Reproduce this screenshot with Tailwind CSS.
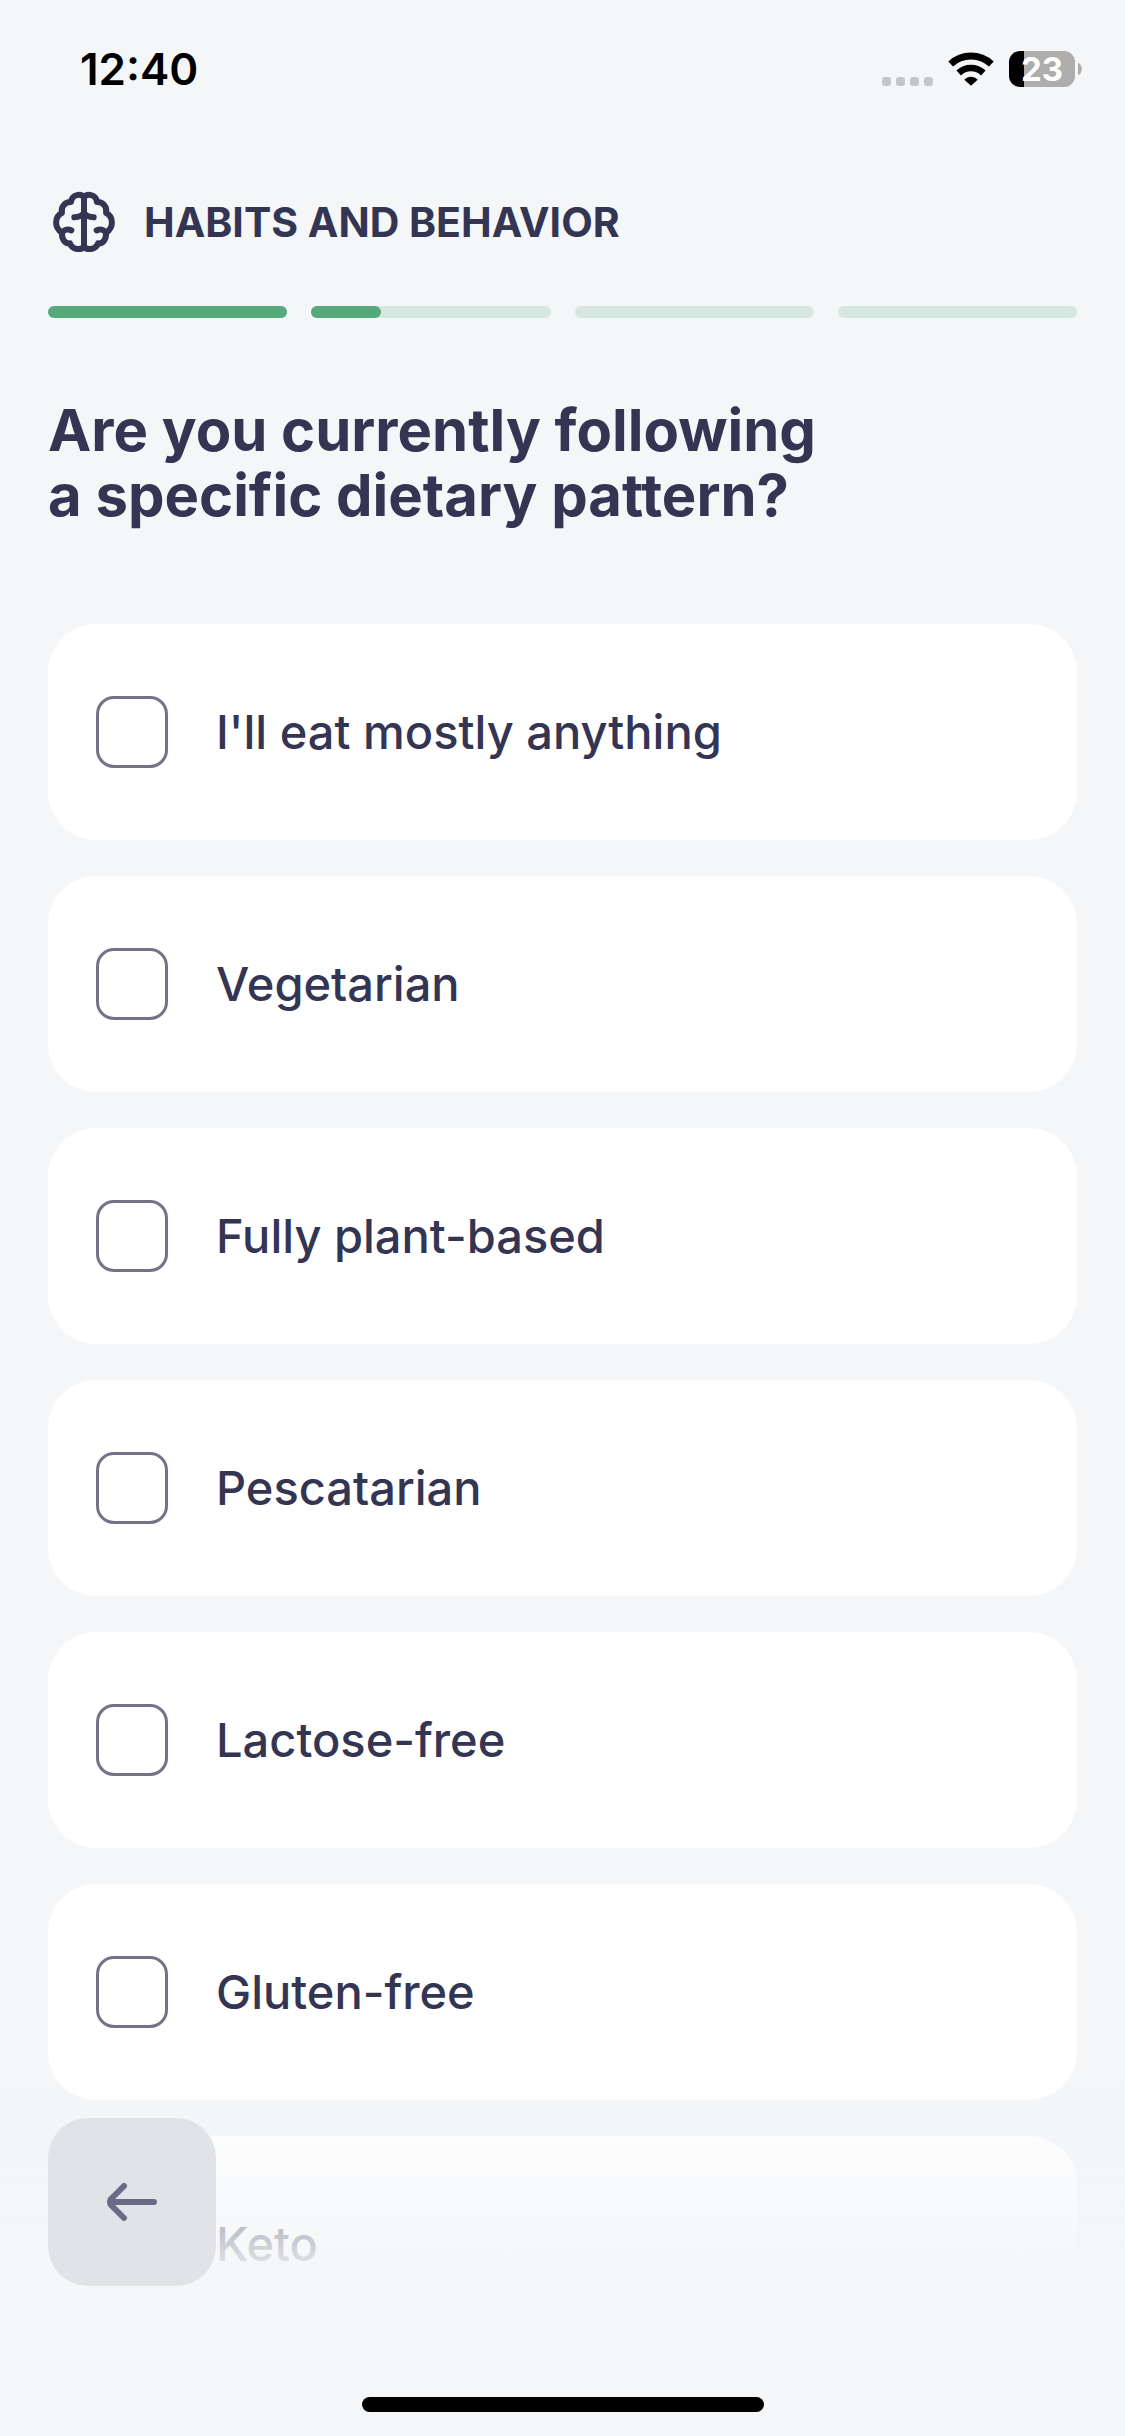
<!DOCTYPE html>
<html lang="en">
<head>
<meta charset="UTF-8">
<meta name="viewport" content="width=device-width, initial-scale=1.0">
<title>Habits and Behavior</title>
<script src="https://cdn.jsdelivr.net/npm/@tailwindcss/browser@4"></script>
</head>
<body class="bg-[#f4f6f8] text-[#343553] font-['Inter',sans-serif]">
<div class="min-h-screen flex flex-col">
<!-- status bar -->
<div class="h-[138px] pl-20 pr-[43px] flex items-center justify-between text-black">
<span class="text-[44px] leading-none font-semibold">12:40</span>
<div class="flex items-center">
<div class="flex gap-[5px] mr-[15px] pt-6">
<span class="size-[9px] rounded-[3px] bg-[#c5c6c8]"></span>
<span class="size-[9px] rounded-[3px] bg-[#c5c6c8]"></span>
<span class="size-[9px] rounded-[3px] bg-[#c5c6c8]"></span>
<span class="size-[9px] rounded-[3px] bg-[#c5c6c8]"></span>
</div>
<svg class="w-[46px] h-[34px] mr-[15px]" viewBox="0 0 138 102" fill="none" stroke="#000">
<path d="M8 36C43 4 95 4 130 36" stroke-width="21"/>
<path d="M32 63C53 43 85 43 106 63" stroke-width="20"/>
<path d="M69 101L49 83C60 71 78 71 89 83Z" fill="#000" stroke="none"/>
</svg>
<div class="w-[66px] h-9 rounded-[11px] bg-linear-to-r from-black from-[15px] to-[#adadae] to-[15px] flex items-center justify-center text-white text-[33px] leading-9 font-bold">23</div>
<svg class="w-1 h-3 ml-[3px]" viewBox="0 0 4 12"><path d="M0 0C5 1 5 11 0 12Z" fill="#adadae"/></svg>
</div>
</div>
<!-- section title and progress -->
<header class="px-12 pt-[51px]">
<div class="flex items-center gap-[27px] pl-[3px]">
<svg class="size-[66px]" viewBox="0 0 198 198" fill="none" stroke="#343553" stroke-width="18" stroke-linecap="round" stroke-linejoin="round">
<path d="M99 27V173"/>
<path d="M99 26C91 13 63 14 60 39C43 38 28 54 33 72C11 82 8 115 33 131C31 150 42 165 57 163C63 183 91 185 99 172"/>
<path d="M99 26C107 13 135 14 138 39C155 38 170 54 165 72C187 82 190 115 165 131C167 150 156 165 141 163C135 183 107 185 99 172"/>
<path d="M70 85Q90 84 99 72Q108 84 128 85"/>
<path d="M34 131C39 121 52 119 61 124"/>
<path d="M164 131C159 121 146 119 137 124"/>
</svg>
<p class="text-[41px] leading-none font-bold">HABITS AND BEHAVIOR</p>
</div>
<div class="mt-[51px] flex gap-6">
<div class="flex-1 h-3 rounded-full bg-[#d6e8df]"><div class="h-3 rounded-full bg-[#55a97a]" style="width:100%"></div></div>
<div class="flex-1 h-3 rounded-full bg-[#d6e8df]"><div class="h-3 rounded-full bg-[#55a97a]" style="width:29%"></div></div>
<div class="flex-1 h-3 rounded-full bg-[#d6e8df]"></div>
<div class="flex-1 h-3 rounded-full bg-[#d6e8df]"></div>
</div>
</header>
<main class="px-12 pt-20">
<h1 class="text-[58px] leading-[65px] font-bold">Are you currently following<br>a specific dietary pattern?</h1>
<form class="mt-24 flex flex-col gap-9">
<label class="h-[216px] px-12 flex items-center gap-12 bg-white rounded-[48px] text-[47px] font-medium"><input type="checkbox" name="diet" value="anything" class="appearance-none size-[72px] border-3 border-[#737387] rounded-[18px] checked:bg-[#55a97a]">I'll eat mostly anything</label>
<label class="h-[216px] px-12 flex items-center gap-12 bg-white rounded-[48px] text-[47px] font-medium"><input type="checkbox" name="diet" value="vegetarian" class="appearance-none size-[72px] border-3 border-[#737387] rounded-[18px] checked:bg-[#55a97a]">Vegetarian</label>
<label class="h-[216px] px-12 flex items-center gap-12 bg-white rounded-[48px] text-[47px] font-medium"><input type="checkbox" name="diet" value="plant" class="appearance-none size-[72px] border-3 border-[#737387] rounded-[18px] checked:bg-[#55a97a]">Fully plant-based</label>
<label class="h-[216px] px-12 flex items-center gap-12 bg-white rounded-[48px] text-[47px] font-medium"><input type="checkbox" name="diet" value="pescatarian" class="appearance-none size-[72px] border-3 border-[#737387] rounded-[18px] checked:bg-[#55a97a]">Pescatarian</label>
<label class="h-[216px] px-12 flex items-center gap-12 bg-white rounded-[48px] text-[47px] font-medium"><input type="checkbox" name="diet" value="lactose" class="appearance-none size-[72px] border-3 border-[#737387] rounded-[18px] checked:bg-[#55a97a]">Lactose-free</label>
<label class="h-[216px] px-12 flex items-center gap-12 bg-white rounded-[48px] text-[47px] font-medium"><input type="checkbox" name="diet" value="gluten" class="appearance-none size-[72px] border-3 border-[#737387] rounded-[18px] checked:bg-[#55a97a]">Gluten-free</label>
<label class="h-[216px] px-12 flex items-center gap-12 bg-white rounded-[48px] text-[47px] font-medium"><input type="checkbox" name="diet" value="keto" class="appearance-none size-[72px] border-3 border-[#737387] rounded-[18px] checked:bg-[#55a97a]">Keto</label>
</form>
</main>
</div>
<!-- bottom bar over the list -->
<footer class="fixed bottom-0 inset-x-0">
<div class="px-12 pt-9 bg-linear-to-b from-[#f4f6f8]/0 to-[#f4f6f8]">
<button type="button" aria-label="Back" class="size-[168px] rounded-[40px] bg-[#e2e3e8] flex items-center justify-center">
<svg class="w-[50px] h-[38px]" viewBox="0 0 50 38" fill="none" stroke="#696a85" stroke-width="6" stroke-linecap="round" stroke-linejoin="round"><path d="M47 19H5M17 3L4 16Q2 19 4 22L17 35"/></svg>
</button>
</div>
<div class="bg-[#f4f6f8] pt-[111px] pb-6">
<div class="mx-auto w-[402px] h-[15px] rounded-full bg-black"></div>
</div>
</footer>
</body>
</html>
